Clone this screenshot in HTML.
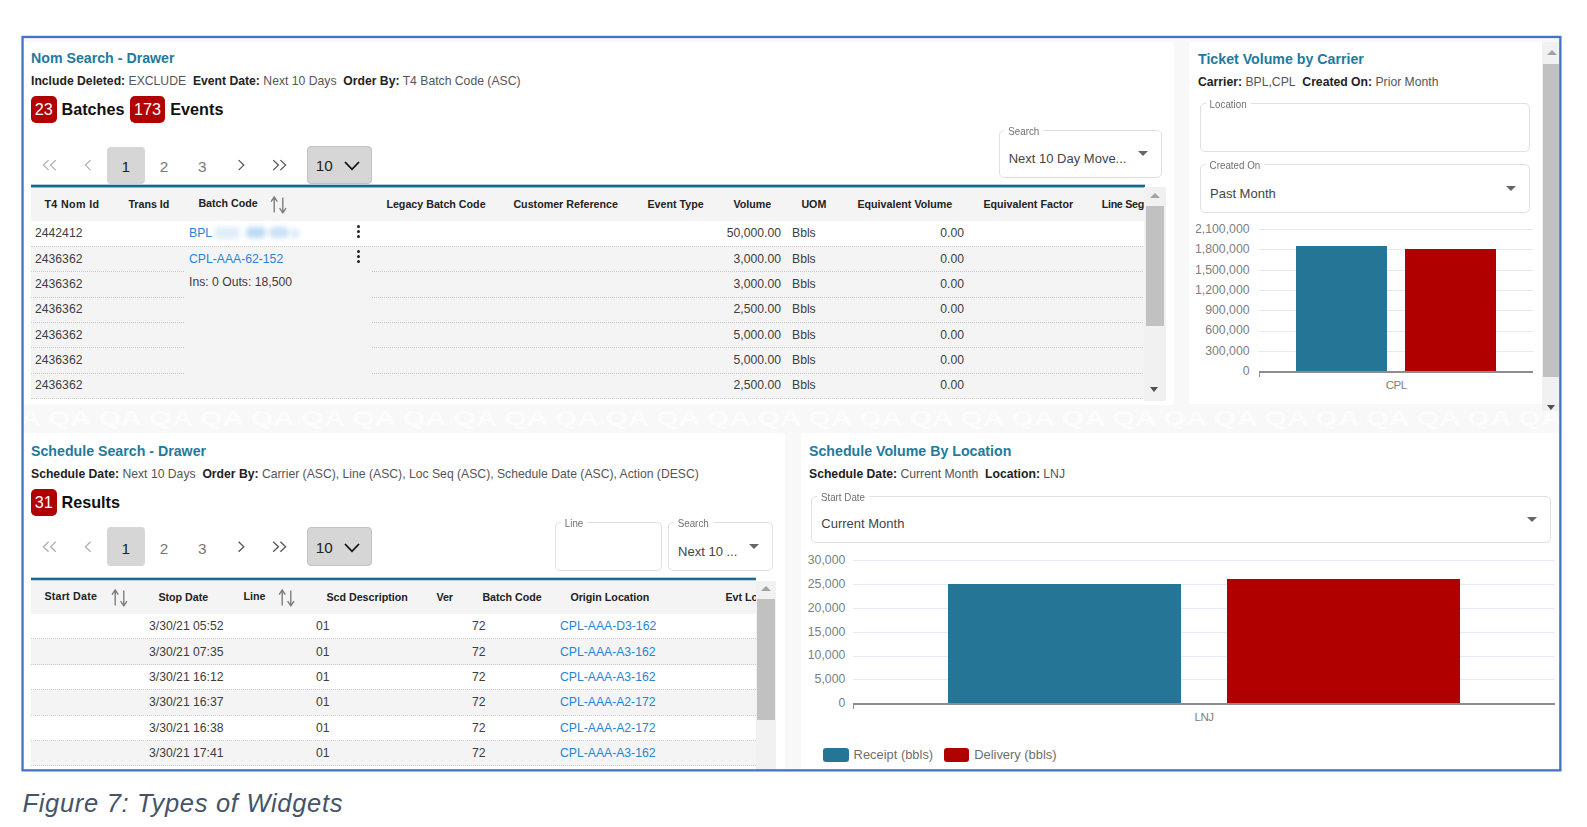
<!DOCTYPE html>
<html><head><meta charset="utf-8"><title>Figure 7</title>
<style>
*{box-sizing:border-box;margin:0;padding:0}
html,body{width:1587px;height:827px;background:#fff;overflow:hidden;font-family:"Liberation Sans",sans-serif;color:#333}
.abs{position:absolute}
#frame{position:absolute;left:21.5px;top:36px;width:1540px;height:735px;background:#f8f8f8;overflow:hidden}
#frameb{position:absolute;left:21.4px;top:35.8px;width:1540px;height:735.6px;border:2.3px solid #4472c4;pointer-events:none}
.wm{position:absolute;font:bold 21px/26px "Liberation Sans",sans-serif;color:#fcfcfc;white-space:nowrap;overflow:hidden;height:26px;transform:scaleX(1.387);transform-origin:0 0}
.card{position:absolute;background:#fff;border-radius:3px}
.title{position:absolute;font-weight:bold;font-size:14.2px;color:#1f7a9c;white-space:nowrap;line-height:16px}
.filt{position:absolute;font-size:12.2px;color:#555;white-space:nowrap;line-height:14px}
.filt b{color:#222}
.badge{position:absolute;background:#b00000;color:#fff;border-radius:5px;font-weight:normal;font-size:16.2px;height:27px;line-height:27px;text-align:center}
.cnt{position:absolute;font-weight:bold;font-size:16.2px;color:#111;white-space:nowrap;line-height:27px}
.pg{position:absolute;font-size:15.3px;color:#777;text-align:center;width:38px}
.pg.dim{color:#aaa;font-size:18px;line-height:33px}
.pg.dk{color:#444;font-size:18px;line-height:33px}
.pg.on{background:#d6d6d6;border-radius:4px;color:#222}
.sel{position:absolute;background:#d6d6d6;border:1px solid #c2c2c2;border-radius:4px;height:38px;width:65px;font-size:15.3px;color:#222;line-height:36px;padding-left:8px}
.field{position:absolute;border:1px solid #e0e0e0;border-radius:5px;background:#fff}
.field .lab{position:absolute;top:-4.7px;left:4.6px;transform:scaleY(1.14);transform-origin:50% 50%;background:#fff;padding:0 4px;font-size:9.8px;color:#707070;line-height:12px;white-space:nowrap}
.field .val{position:absolute;left:9px;font-size:13px;color:#444;white-space:nowrap;line-height:16px}
.tri{position:absolute;width:0;height:0;border-left:5.2px solid transparent;border-right:5.2px solid transparent;border-top:5.2px solid #666}
.thead{position:absolute;background:#f4f4f4}
.th{position:absolute;font-weight:bold;font-size:10.7px;margin-left:.4px;color:#222;white-space:nowrap;line-height:14px}
.rowbg{position:absolute}
.dot{position:absolute;height:0;border-top:1px dotted #c9c9c9}
.td{position:absolute;font-size:12.2px;color:#3d3d3d;white-space:nowrap;line-height:14px}
.td.r{text-align:right}
.lnk{color:#2584d8}
.blur{position:absolute;background:#b9d8f4;filter:blur(2.5px);border-radius:5px}
.kebab{position:absolute;width:3px}
.kebab i{display:block;width:3px;height:3px;border-radius:50%;background:#222;margin-bottom:2px}
.sb{position:absolute;background:#f1f1f1}
.sbt{position:absolute;background:#c1c1c1}
.up{position:absolute;width:0;height:0;border-left:5px solid transparent;border-right:5px solid transparent;border-bottom:5.4px solid #a3a3a3}
.dn{position:absolute;width:0;height:0;border-left:4.7px solid transparent;border-right:4.7px solid transparent;border-top:5px solid #505050}
.ax{position:absolute;font-size:12.3px;color:#808080;white-space:nowrap;line-height:14px;text-align:right}
.gl{position:absolute;height:1px;background:#e3eaf3}
#cap{position:absolute;left:22.4px;top:787px;letter-spacing:0.7px;font-style:italic;font-size:25.5px;color:#44546a;line-height:32px;white-space:nowrap}

</style></head><body>
<div id="frame">
<div class="wm" style="left:-25px;top:368.9px;width:1210px">QA QA QA QA QA QA QA QA QA QA QA QA QA QA QA QA QA QA QA QA QA QA QA QA QA QA QA QA QA QA QA QA QA QA QA QA QA QA QA QA QA QA QA QA QA QA QA QA QA QA QA QA QA QA QA QA QA QA QA QA</div></div>
<div class="card" style="left:23px;top:42px;width:1150.5px;height:363px"></div>
<div class="card" style="left:1188.5px;top:42px;width:372px;height:362px"></div>
<div class="card" style="left:23px;top:433.3px;width:761.7px;height:340px"></div>
<div class="card" style="left:801px;top:433.3px;width:760px;height:340px"></div>
<div class="title" style="left:31px;top:50.4px">Nom Search - Drawer</div>
<div class="filt" style="left:31px;top:74.4px"><b>Include Deleted:</b> EXCLUDE&nbsp; <b>Event Date:</b> Next 10 Days&nbsp; <b>Order By:</b> T4 Batch Code (ASC)</div>
<div class="badge" style="left:30.5px;top:96.3px;width:26.3px">23</div><div class="cnt" style="left:61.5px;top:96.3px">Batches</div><div class="badge" style="left:130.2px;top:96.3px;width:34.8px">173</div><div class="cnt" style="left:170.3px;top:96.3px">Events</div>
<svg class="abs" style="left:0;top:0" width="1587" height="827"><path d="M48.6 160.1 L43.4 165.1 L48.6 170.1 M55.8 160.1 L50.6 165.1 L55.8 170.1 " fill="none" stroke="#b0b0b0" stroke-width="1.3"/></svg>
<svg class="abs" style="left:0;top:0" width="1587" height="827"><path d="M90.6 160.1 L85.4 165.1 L90.6 170.1 " fill="none" stroke="#b0b0b0" stroke-width="1.3"/></svg>
<div class="pg on" style="left:106.7px;top:146.6px;height:37px;line-height:39.2px">1</div>
<div class="pg" style="left:145px;top:146.6px;height:37px;line-height:39.2px">2</div>
<div class="pg" style="left:183.3px;top:146.6px;height:37px;line-height:39.2px">3</div>
<svg class="abs" style="left:0;top:0" width="1587" height="827"><path d="M238.6 160.1 L243.8 165.1 L238.6 170.1 " fill="none" stroke="#555" stroke-width="1.3"/></svg>
<svg class="abs" style="left:0;top:0" width="1587" height="827"><path d="M273.2 160.1 L278.4 165.1 L273.2 170.1 M280.4 160.1 L285.6 165.1 L280.4 170.1 " fill="none" stroke="#555" stroke-width="1.3"/></svg>
<div class="sel" style="left:306.7px;top:146.2px;height:37.8px;line-height:37.6px">10<svg width="16" height="10" viewBox="0 0 16 10" style="position:absolute;left:36.5px;top:14.0px"><path d="M1 1 L8 8.3 L15 1" fill="none" stroke="#111" stroke-width="1.8"/></svg></div>
<div class="field" style="left:998.7px;top:130px;width:163px;height:48px"><span class="lab">Search</span>
<span class="val" style="top:19.6px;font-size:13px">Next 10 Day Move...</span>
<span class="tri" style="right:13.2px;top:20.2px"></span>
</div>
<div class="thead" style="left:31px;top:188px;width:1134.5px;height:33px"></div>
<div class="abs" style="left:31px;top:184px;width:1113.5px;height:1px;background:rgba(20,102,138,0.35)"></div>
<div class="abs" style="left:31px;top:185px;width:1113.5px;height:1px;background:rgba(20,102,138,1)"></div>
<div class="abs" style="left:31px;top:186px;width:1113.5px;height:1px;background:rgba(20,102,138,1)"></div>
<div class="abs" style="left:31px;top:187px;width:1113.5px;height:1px;background:rgba(20,102,138,0.45)"></div>
<div class="th" style="left:44px;top:197px"><span style="letter-spacing:.38px">T4 Nom Id</span></div>
<div class="th" style="left:128px;top:197px">Trans Id</div>
<div class="th" style="left:198px;top:196px">Batch Code</div>
<div class="th" style="left:386px;top:197px">Legacy Batch Code</div>
<div class="th" style="left:513px;top:197px">Customer Reference</div>
<div class="th" style="left:647px;top:197px">Event Type</div>
<div class="th" style="left:733px;top:197px">Volume</div>
<div class="th" style="left:801px;top:197px">UOM</div>
<div class="th" style="left:857px;top:197px">Equivalent Volume</div>
<div class="th" style="left:983px;top:197px">Equivalent Factor</div>
<div class="th" style="left:1101.3px;top:197px"><span style="letter-spacing:-.28px">Line Seg</span></div>
<svg class="abs" style="left:269.8px;top:195px" width="18" height="20" viewBox="0 0 18 20"><path d="M4.2 17.6V2.2M1.1 6.6l3.1-4.6 3.1 4.6M12.8 2.4v15.2M9.6 13.2l3.2 4.6 3.2-4.6" fill="none" stroke="#7a7a7a" stroke-width="1.35"/></svg>
<div class="rowbg" style="left:31px;top:220.80px;width:1113.5px;height:25.36px;background:#fff"></div>
<div class="td" style="left:35px;top:226.20px">2442412</div>
<div class="td r" style="left:700px;width:81px;top:226.20px">50,000.00</div>
<div class="td" style="left:792px;top:226.20px">Bbls</div>
<div class="td r" style="left:900px;width:64px;top:226.20px">0.00</div>
<div class="rowbg" style="left:31px;top:246.16px;width:1113.5px;height:25.36px;background:#f4f4f4"></div>
<div class="td" style="left:35px;top:251.56px">2436362</div>
<div class="td r" style="left:700px;width:81px;top:251.56px">3,000.00</div>
<div class="td" style="left:792px;top:251.56px">Bbls</div>
<div class="td r" style="left:900px;width:64px;top:251.56px">0.00</div>
<div class="rowbg" style="left:31px;top:271.52px;width:1113.5px;height:25.36px;background:#f4f4f4"></div>
<div class="td" style="left:35px;top:276.92px">2436362</div>
<div class="td r" style="left:700px;width:81px;top:276.92px">3,000.00</div>
<div class="td" style="left:792px;top:276.92px">Bbls</div>
<div class="td r" style="left:900px;width:64px;top:276.92px">0.00</div>
<div class="rowbg" style="left:31px;top:296.88px;width:1113.5px;height:25.36px;background:#f4f4f4"></div>
<div class="td" style="left:35px;top:302.28px">2436362</div>
<div class="td r" style="left:700px;width:81px;top:302.28px">2,500.00</div>
<div class="td" style="left:792px;top:302.28px">Bbls</div>
<div class="td r" style="left:900px;width:64px;top:302.28px">0.00</div>
<div class="rowbg" style="left:31px;top:322.24px;width:1113.5px;height:25.36px;background:#f4f4f4"></div>
<div class="td" style="left:35px;top:327.64px">2436362</div>
<div class="td r" style="left:700px;width:81px;top:327.64px">5,000.00</div>
<div class="td" style="left:792px;top:327.64px">Bbls</div>
<div class="td r" style="left:900px;width:64px;top:327.64px">0.00</div>
<div class="rowbg" style="left:31px;top:347.60px;width:1113.5px;height:25.36px;background:#f4f4f4"></div>
<div class="td" style="left:35px;top:353.00px">2436362</div>
<div class="td r" style="left:700px;width:81px;top:353.00px">5,000.00</div>
<div class="td" style="left:792px;top:353.00px">Bbls</div>
<div class="td r" style="left:900px;width:64px;top:353.00px">0.00</div>
<div class="rowbg" style="left:31px;top:372.96px;width:1113.5px;height:25.36px;background:#f4f4f4"></div>
<div class="td" style="left:35px;top:378.36px">2436362</div>
<div class="td r" style="left:700px;width:81px;top:378.36px">2,500.00</div>
<div class="td" style="left:792px;top:378.36px">Bbls</div>
<div class="td r" style="left:900px;width:64px;top:378.36px">0.00</div>
<div class="dot" style="left:31px;top:246px;width:1113.5px"></div>
<div class="dot" style="left:31px;top:271px;width:153px"></div>
<div class="dot" style="left:372px;top:271px;width:772.5px"></div>
<div class="dot" style="left:31px;top:297px;width:153px"></div>
<div class="dot" style="left:372px;top:297px;width:772.5px"></div>
<div class="dot" style="left:31px;top:322px;width:153px"></div>
<div class="dot" style="left:372px;top:322px;width:772.5px"></div>
<div class="dot" style="left:31px;top:347px;width:153px"></div>
<div class="dot" style="left:372px;top:347px;width:772.5px"></div>
<div class="dot" style="left:31px;top:373px;width:153px"></div>
<div class="dot" style="left:372px;top:373px;width:772.5px"></div>
<div class="dot" style="left:31px;top:398px;width:1113.5px"></div>
<div class="td lnk" style="left:189px;top:226px">BPL</div>
<div class="blur" style="left:214px;top:227px;width:26px;height:12px;opacity:.45"></div><div class="blur" style="left:246px;top:227px;width:20px;height:11px;opacity:.95"></div><div class="blur" style="left:269px;top:227px;width:20px;height:11px;opacity:.75"></div><div class="blur" style="left:290px;top:229px;width:10px;height:9px;opacity:.5"></div>
<div class="td lnk" style="left:189px;top:251.8px">CPL-AAA-62-152</div>
<div class="td" style="left:189px;top:274.6px">Ins: 0 Outs: 18,500</div>
<div class="kebab" style="left:357px;top:225px"><i></i><i></i><i></i></div>
<div class="kebab" style="left:357px;top:250px"><i></i><i></i><i></i></div>
<div class="sb" style="left:1144.3px;top:187px;width:21.4px;height:214.0px"></div>
<div class="sbt" style="left:1146.3px;top:205.6px;width:17.4px;height:120.9px"></div>
<div class="up" style="left:1149.7px;top:192.8px"></div>
<div class="dn" style="left:1150.0px;top:387px"></div>
<div class="title" style="left:1198px;top:51.1px">Ticket Volume by Carrier</div>
<div class="filt" style="left:1198px;top:74.7px"><b>Carrier:</b> BPL,CPL&nbsp; <b>Created On:</b> Prior Month</div>
<div class="field" style="left:1200px;top:103px;width:330px;height:48.8px"><span class="lab">Location</span>
</div>
<div class="field" style="left:1200px;top:164px;width:330px;height:48.8px"><span class="lab">Created On</span>
<span class="val" style="top:20.7px;font-size:13px">Past Month</span>
<span class="tri" style="right:13.2px;top:21.3px"></span>
</div>
<div class="gl" style="left:1259px;top:228.9px;width:274px"></div>
<div class="ax" style="left:1196.3px;width:53.299999999999955px;top:221.8px;overflow:hidden;direction:rtl">2,100,000</div>
<div class="gl" style="left:1259px;top:249.2px;width:274px"></div>
<div class="ax" style="left:1196.3px;width:53.299999999999955px;top:242.1px;overflow:hidden;direction:rtl">1,800,000</div>
<div class="gl" style="left:1259px;top:269.6px;width:274px"></div>
<div class="ax" style="left:1196.3px;width:53.299999999999955px;top:262.5px;overflow:hidden;direction:rtl">1,500,000</div>
<div class="gl" style="left:1259px;top:289.9px;width:274px"></div>
<div class="ax" style="left:1196.3px;width:53.299999999999955px;top:282.8px;overflow:hidden;direction:rtl">1,200,000</div>
<div class="gl" style="left:1259px;top:310.2px;width:274px"></div>
<div class="ax" style="left:1196.3px;width:53.299999999999955px;top:303.1px;overflow:hidden;direction:rtl">900,000</div>
<div class="gl" style="left:1259px;top:330.5px;width:274px"></div>
<div class="ax" style="left:1196.3px;width:53.299999999999955px;top:323.4px;overflow:hidden;direction:rtl">600,000</div>
<div class="gl" style="left:1259px;top:350.9px;width:274px"></div>
<div class="ax" style="left:1196.3px;width:53.299999999999955px;top:343.8px;overflow:hidden;direction:rtl">300,000</div>
<div class="ax" style="left:1196.3px;width:53.299999999999955px;top:364.1px;overflow:hidden;direction:rtl">0</div>
<div class="abs" style="left:1296px;top:245.7px;width:90.8px;height:126.0px;background:#257596"></div>
<div class="abs" style="left:1405.4px;top:248.9px;width:90.6px;height:122.8px;background:#b00000"></div>
<div class="abs" style="left:1259px;top:370.6px;width:274px;height:2px;background:#8c8c92"></div>
<div class="abs" style="left:1258.5px;top:370.7px;width:1.2px;height:6px;background:#8c8c92"></div>
<div class="ax" style="left:1356.2px;width:80px;text-align:center;top:378.2px;font-size:11.6px;letter-spacing:-0.5px">CPL</div>
<div class="sb" style="left:1542px;top:42px;width:17.5px;height:369.0px"></div>
<div class="sbt" style="left:1543px;top:63.7px;width:16.2px;height:313.1px"></div>
<div class="up" style="left:1547.0px;top:50.3px"></div>
<div class="dn" style="left:1547.3px;top:405.4px"></div>
<div class="title" style="left:31px;top:442.6px">Schedule Search - Drawer</div>
<div class="filt" style="left:31px;top:467.3px"><b>Schedule Date:</b> Next 10 Days&nbsp; <b>Order By:</b> Carrier (ASC), Line (ASC), Loc Seq (ASC), Schedule Date (ASC), Action (DESC)</div>
<div class="badge" style="left:30.5px;top:489px;width:26.3px">31</div><div class="cnt" style="left:61.5px;top:489px">Results</div>
<svg class="abs" style="left:0;top:0" width="1587" height="827"><path d="M48.6 541.7 L43.4 546.7 L48.6 551.7 M55.8 541.7 L50.6 546.7 L55.8 551.7 " fill="none" stroke="#b0b0b0" stroke-width="1.3"/></svg>
<svg class="abs" style="left:0;top:0" width="1587" height="827"><path d="M90.6 541.7 L85.4 546.7 L90.6 551.7 " fill="none" stroke="#b0b0b0" stroke-width="1.3"/></svg>
<div class="pg on" style="left:106.7px;top:527.4px;height:38.6px;line-height:43.4px">1</div>
<div class="pg" style="left:145px;top:527.4px;height:38.6px;line-height:43.4px">2</div>
<div class="pg" style="left:183.3px;top:527.4px;height:38.6px;line-height:43.4px">3</div>
<svg class="abs" style="left:0;top:0" width="1587" height="827"><path d="M238.6 541.7 L243.8 546.7 L238.6 551.7 " fill="none" stroke="#555" stroke-width="1.3"/></svg>
<svg class="abs" style="left:0;top:0" width="1587" height="827"><path d="M273.2 541.7 L278.4 546.7 L273.2 551.7 M280.4 541.7 L285.6 546.7 L280.4 551.7 " fill="none" stroke="#555" stroke-width="1.3"/></svg>
<div class="sel" style="left:306.7px;top:527.0px;height:39.4px;line-height:39.2px">10<svg width="16" height="10" viewBox="0 0 16 10" style="position:absolute;left:36.5px;top:14.8px"><path d="M1 1 L8 8.3 L15 1" fill="none" stroke="#111" stroke-width="1.8"/></svg></div>
<div class="field" style="left:555.2px;top:522px;width:106.4px;height:49px"><span class="lab">Line</span>
</div>
<div class="field" style="left:668.1px;top:522px;width:105px;height:49px"><span class="lab">Search</span>
<span class="val" style="top:20.6px;font-size:13px">Next 10 ...</span>
<span class="tri" style="right:13.2px;top:21.2px"></span>
</div>
<div class="thead" style="left:31px;top:581px;width:745px;height:33px"></div>
<div class="abs" style="left:31px;top:577px;width:725px;height:1px;background:rgba(20,102,138,0.3)"></div>
<div class="abs" style="left:31px;top:578px;width:725px;height:1px;background:rgba(20,102,138,1)"></div>
<div class="abs" style="left:31px;top:579px;width:725px;height:1px;background:rgba(20,102,138,0.95)"></div>
<div class="abs" style="left:31px;top:580px;width:725px;height:1px;background:rgba(20,102,138,0.3)"></div>
<div class="th" style="left:44px;top:589.2px"><span style="letter-spacing:.22px">Start Date</span></div>
<div class="th" style="left:158px;top:590.2px">Stop Date</div>
<div class="th" style="left:243px;top:589.2px">Line</div>
<div class="th" style="left:326px;top:590.2px">Scd Description</div>
<div class="th" style="left:436px;top:590.2px">Ver</div>
<div class="th" style="left:482px;top:590.2px">Batch Code</div>
<div class="th" style="left:570px;top:590.2px">Origin Location</div>
<div class="th" style="left:725px;top:590.2px;width:32px;overflow:hidden">Evt Loc</div>
<svg class="abs" style="left:110.6px;top:588.2px" width="18" height="20" viewBox="0 0 18 20"><path d="M4.2 17.6V2.2M1.1 6.6l3.1-4.6 3.1 4.6M12.8 2.4v15.2M9.6 13.2l3.2 4.6 3.2-4.6" fill="none" stroke="#7a7a7a" stroke-width="1.35"/></svg>
<svg class="abs" style="left:277.6px;top:588.2px" width="18" height="20" viewBox="0 0 18 20"><path d="M4.2 17.6V2.2M1.1 6.6l3.1-4.6 3.1 4.6M12.8 2.4v15.2M9.6 13.2l3.2 4.6 3.2-4.6" fill="none" stroke="#7a7a7a" stroke-width="1.35"/></svg>
<div class="rowbg" style="left:31px;top:613.80px;width:725px;height:25.36px;background:#fff"></div>
<div class="td" style="left:149px;top:619.20px">3/30/21 05:52</div>
<div class="td" style="left:316px;top:619.20px">01</div>
<div class="td" style="left:472px;top:619.20px">72</div>
<div class="td lnk" style="left:560px;top:619.20px">CPL-AAA-D3-162</div>
<div class="rowbg" style="left:31px;top:639.16px;width:725px;height:25.36px;background:#f4f4f4"></div>
<div class="td" style="left:149px;top:644.56px">3/30/21 07:35</div>
<div class="td" style="left:316px;top:644.56px">01</div>
<div class="td" style="left:472px;top:644.56px">72</div>
<div class="td lnk" style="left:560px;top:644.56px">CPL-AAA-A3-162</div>
<div class="rowbg" style="left:31px;top:664.52px;width:725px;height:25.36px;background:#fff"></div>
<div class="td" style="left:149px;top:669.92px">3/30/21 16:12</div>
<div class="td" style="left:316px;top:669.92px">01</div>
<div class="td" style="left:472px;top:669.92px">72</div>
<div class="td lnk" style="left:560px;top:669.92px">CPL-AAA-A3-162</div>
<div class="rowbg" style="left:31px;top:689.88px;width:725px;height:25.36px;background:#f4f4f4"></div>
<div class="td" style="left:149px;top:695.28px">3/30/21 16:37</div>
<div class="td" style="left:316px;top:695.28px">01</div>
<div class="td" style="left:472px;top:695.28px">72</div>
<div class="td lnk" style="left:560px;top:695.28px">CPL-AAA-A2-172</div>
<div class="rowbg" style="left:31px;top:715.24px;width:725px;height:25.36px;background:#fff"></div>
<div class="td" style="left:149px;top:720.64px">3/30/21 16:38</div>
<div class="td" style="left:316px;top:720.64px">01</div>
<div class="td" style="left:472px;top:720.64px">72</div>
<div class="td lnk" style="left:560px;top:720.64px">CPL-AAA-A2-172</div>
<div class="rowbg" style="left:31px;top:740.60px;width:725px;height:25.36px;background:#f4f4f4"></div>
<div class="td" style="left:149px;top:746.00px">3/30/21 17:41</div>
<div class="td" style="left:316px;top:746.00px">01</div>
<div class="td" style="left:472px;top:746.00px">72</div>
<div class="td lnk" style="left:560px;top:746.00px">CPL-AAA-A3-162</div>
<div class="dot" style="left:31px;top:638px;width:725px"></div>
<div class="dot" style="left:31px;top:664px;width:725px"></div>
<div class="dot" style="left:31px;top:689px;width:725px"></div>
<div class="dot" style="left:31px;top:715px;width:725px"></div>
<div class="dot" style="left:31px;top:740px;width:725px"></div>
<div class="dot" style="left:31px;top:765px;width:725px"></div>
<div class="sb" style="left:755.8px;top:581px;width:20.2px;height:190.0px"></div>
<div class="sbt" style="left:757.1px;top:599.1px;width:17.7px;height:120.9px"></div>
<div class="up" style="left:761.1px;top:586px"></div>
<div class="title" style="left:809px;top:442.6px">Schedule Volume By Location</div>
<div class="filt" style="left:809px;top:467.3px"><b>Schedule Date:</b> Current Month&nbsp; <b>Location:</b> LNJ</div>
<div class="field" style="left:811.3px;top:496px;width:739.7px;height:46.8px"><span class="lab">Start Date</span>
<span class="val" style="top:19.1px;font-size:13px">Current Month</span>
<span class="tri" style="right:13.2px;top:19.7px"></span>
</div>
<div class="gl" style="left:853px;top:560.3px;width:702px"></div>
<div class="ax" style="left:806.5px;width:38.89999999999998px;top:553.2px;overflow:hidden;direction:rtl">30,000</div>
<div class="gl" style="left:853px;top:584.1px;width:702px"></div>
<div class="ax" style="left:806.5px;width:38.89999999999998px;top:577.0px;overflow:hidden;direction:rtl">25,000</div>
<div class="gl" style="left:853px;top:607.9px;width:702px"></div>
<div class="ax" style="left:806.5px;width:38.89999999999998px;top:600.8px;overflow:hidden;direction:rtl">20,000</div>
<div class="gl" style="left:853px;top:631.7px;width:702px"></div>
<div class="ax" style="left:806.5px;width:38.89999999999998px;top:624.6px;overflow:hidden;direction:rtl">15,000</div>
<div class="gl" style="left:853px;top:655.5px;width:702px"></div>
<div class="ax" style="left:806.5px;width:38.89999999999998px;top:648.4px;overflow:hidden;direction:rtl">10,000</div>
<div class="gl" style="left:853px;top:679.3px;width:702px"></div>
<div class="ax" style="left:806.5px;width:38.89999999999998px;top:672.2px;overflow:hidden;direction:rtl">5,000</div>
<div class="ax" style="left:806.5px;width:38.89999999999998px;top:696.0px;overflow:hidden;direction:rtl">0</div>
<div class="abs" style="left:948px;top:584.2px;width:233.0px;height:119.4px;background:#257596"></div>
<div class="abs" style="left:1227px;top:579.4px;width:233.0px;height:124.2px;background:#b00000"></div>
<div class="abs" style="left:853px;top:702.5px;width:702px;height:2px;background:#8c8c92"></div>
<div class="abs" style="left:852.5px;top:702.6px;width:1.2px;height:6px;background:#8c8c92"></div>
<div class="ax" style="left:1164px;width:80px;text-align:center;top:710.3px;font-size:11.6px;letter-spacing:-0.5px">LNJ</div>
<div class="abs" style="left:823.3px;top:748.2px;width:25.5px;height:14px;border-radius:3px;background:#257596"></div>
<div class="ax" style="left:853.6px;top:746.6px;text-align:left;font-size:12.9px;line-height:16px;color:#6e6e6e">Receipt (bbls)</div>
<div class="abs" style="left:943.6px;top:748.2px;width:25.4px;height:14px;border-radius:3px;background:#b00000"></div>
<div class="ax" style="left:974.2px;top:746.6px;text-align:left;font-size:12.9px;line-height:16px;color:#6e6e6e">Delivery (bbls)</div>
<svg class="abs" style="left:0;top:0;pointer-events:none" width="1587" height="827"><rect x="22.55" y="36.95" width="1537.8" height="733.4" fill="none" stroke="#4472c4" stroke-width="2.3"/></svg>
<div id="cap">Figure 7: Types of Widgets</div>
</body></html>
